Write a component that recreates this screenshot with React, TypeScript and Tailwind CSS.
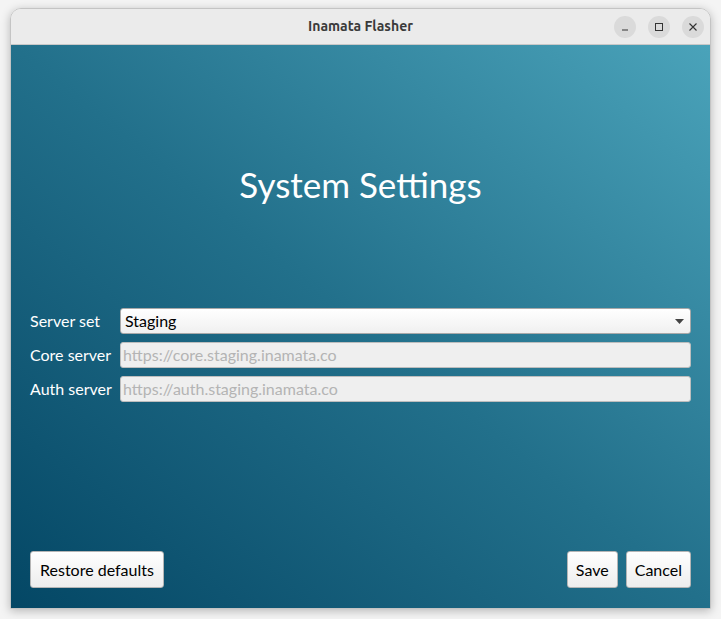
const lato = { fontFamily: 'Lato, "Open Sans", sans-serif' };

function TitleButton({ children }: { children: React.ReactNode }) {
  return (
    <div className="w-[22px] h-[22px] rounded-full bg-[#dadada] flex items-center justify-center text-[#333]">
      {children}
    </div>
  );
}

function Field({ label, value, select = false }: { label: string; value: string; select?: boolean }) {
  return (
    <div className="flex items-center h-[26px]">
      <div className="w-[90px] shrink-0 text-[16px] text-white leading-none">{label}</div>
      {select ? (
        <div className="flex-1 h-[26px] rounded-[3px] border border-[#a9a9a9] bg-gradient-to-b from-white to-[#f0f0f0] flex items-center justify-between pl-[4px] pr-[6px] text-[16px] text-black">
          <span>{value}</span>
          <svg width="9" height="5" viewBox="0 0 9 5">
            <path d="M0 0h9L4.5 5z" fill="#444" />
          </svg>
        </div>
      ) : (
        <div className="flex-1 h-[26px] rounded-[3px] border border-[#bdbdbd] bg-[#efefef] flex items-center pl-[2px] text-[16px] text-[#b4b4b4]">
          {value}
        </div>
      )}
    </div>
  );
}

function Button({ children, wide = false }: { children: React.ReactNode; wide?: boolean }) {
  return (
    <button
      type="button"
      className={
        'h-[37px] rounded-[3px] border border-[#b5b5b5] bg-gradient-to-b from-white to-[#ededed] text-[16px] text-black ' +
        (wide ? 'px-[9px]' : 'px-[8px]')
      }
    >
      {children}
    </button>
  );
}

export default function App() {
  return (
    <div className="w-[721px] h-[619px] bg-[#f4f4f4] pt-[8px] px-[10px] pb-[10px]">
      <div className="w-full h-full flex flex-col rounded-t-[11px] overflow-hidden border border-[#c4c4c4] shadow-[0_2px_10px_rgba(0,0,0,0.25)]">
        <div
          className="h-[36px] shrink-0 bg-[#ebebeb] border-b border-[#c8c8c8] relative flex items-center justify-center"
          style={{ fontFamily: 'Ubuntu, "Noto Sans", sans-serif' }}
        >
          <span className="text-[14px] font-bold text-[#3a3a3a]">Inamata Flasher</span>
          <div className="absolute right-[6px] top-[7px] flex gap-[12px]">
            <TitleButton>
              <svg width="10" height="10" viewBox="0 0 10 10">
                <path d="M2 8h6" stroke="#333" strokeWidth="1" />
              </svg>
            </TitleButton>
            <TitleButton>
              <svg width="10" height="10" viewBox="0 0 10 10">
                <rect x="1.5" y="1.5" width="7" height="7" fill="none" stroke="#333" strokeWidth="1" />
              </svg>
            </TitleButton>
            <TitleButton>
              <svg width="10" height="10" viewBox="0 0 10 10">
                <path d="M1.5 1.5l7 7M8.5 1.5l-7 7" stroke="#333" strokeWidth="1.1" />
              </svg>
            </TitleButton>
          </div>
        </div>
        <div
          className="flex-1 flex flex-col bg-gradient-to-tr from-[#044765] via-[#22708b] to-[#4aa3ba] pl-[19px] pr-[19px] pb-[20px]"
          style={lato}
        >
          <h1 className="mt-[118px] text-center text-[35px] leading-[42px] text-white font-normal">System Settings</h1>
          <div className="mt-[103px] flex flex-col gap-[8px]">
            <Field label="Server set" value="Staging" select />
            <Field label="Core server" value="https://core.staging.inamata.co" />
            <Field label="Auth server" value="https://auth.staging.inamata.co" />
          </div>
          <div className="mt-auto flex items-center">
            <Button wide>Restore defaults</Button>
            <div className="ml-auto flex gap-[8px]">
              <Button>Save</Button>
              <Button>Cancel</Button>
            </div>
          </div>
        </div>
      </div>
    </div>
  );
}
